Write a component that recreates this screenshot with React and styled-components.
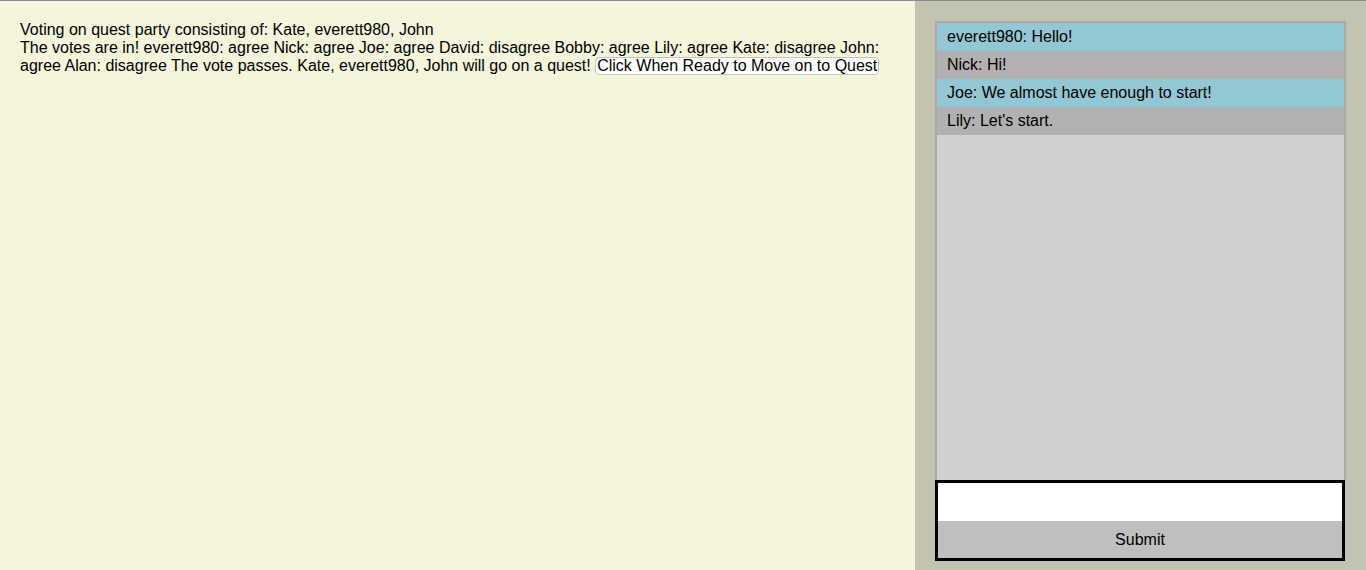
import React from "react";
import styled, { createGlobalStyle } from "styled-components";

const Global = createGlobalStyle`
  html, body { margin: 0; padding: 0; height: 100%; }
  body {
    font-family: "Liberation Sans", Arial, Helvetica, sans-serif;
    font-size: 16px;
    color: #000;
    border-top: 1px solid #8a8a8a;
    box-sizing: border-box;
  }
  #root { height: 100%; }
`;

const Page = styled.div`
  display: flex;
  height: 569px;
`;

const Main = styled.div`
  flex: 0 0 915px;
  background: #f5f5dc;
  padding: 20px 20px 0 20px;
  box-sizing: border-box;
  line-height: 18px;
`;

const Line = styled.div``;

const ReadyButton = styled.button`
  font-family: inherit;
  font-size: 16px;
  line-height: 16px;
  padding: 0 1px;
  background: #fff;
  border: 1px solid #c4c4c4;
  border-radius: 4px;
  color: #000;
  margin: 0;
`;

const Side = styled.div`
  flex: 1;
  background: #c2c3b1;
  padding: 20px 19px 9px 19px;
  box-sizing: border-box;
  display: flex;
  flex-direction: column;
`;

const ChatLog = styled.div`
  flex: 1;
  margin: 0 1px;
  background: #d0d0d0;
  border: 2px solid #a9a9a9;
  border-bottom: none;
  display: flex;
  flex-direction: column;
`;

const Message = styled.div`
  height: 28px;
  line-height: 28px;
  padding-left: 10px;
  background: ${(p) => (p.$alt ? "#b1b1b1" : "#93c7d3")};
`;

const Form = styled.form`
  flex: 0 0 81px;
  box-sizing: border-box;
  border: 3px solid #000;
  display: flex;
  flex-direction: column;
  margin: 0 2px 0 1px;
`;

const Input = styled.input`
  flex: 0 0 38px;
  height: 38px;
  border: none;
  background: #fff;
  margin: 0;
  padding: 0;
  outline: none;
`;

const Submit = styled.button`
  flex: 1;
  border: none;
  background: #bfbfbf;
  font-family: inherit;
  font-size: 16px;
  color: #000;
  margin: 0;
`;

const messages = [
  "everett980: Hello!",
  "Nick: Hi!",
  "Joe: We almost have enough to start!",
  "Lily: Let's start.",
];

export default function App() {
  return (
    <>
      <Global />
      <Page>
        <Main>
          <Line>Voting on quest party consisting of: Kate, everett980, John</Line>
          <Line>
            The votes are in! everett980: agree Nick: agree Joe: agree David: disagree Bobby: agree
            Lily: agree Kate: disagree John: agree Alan: disagree The vote passes. Kate, everett980,
            John will go on a quest! <ReadyButton>Click When Ready to Move on to Quest</ReadyButton>
          </Line>
        </Main>
        <Side>
          <ChatLog>
            {messages.map((m, i) => (
              <Message key={i} $alt={i % 2 === 1}>
                {m}
              </Message>
            ))}
          </ChatLog>
          <Form onSubmit={(e) => e.preventDefault()}>
            <Input type="text" />
            <Submit type="submit">Submit</Submit>
          </Form>
        </Side>
      </Page>
    </>
  );
}
